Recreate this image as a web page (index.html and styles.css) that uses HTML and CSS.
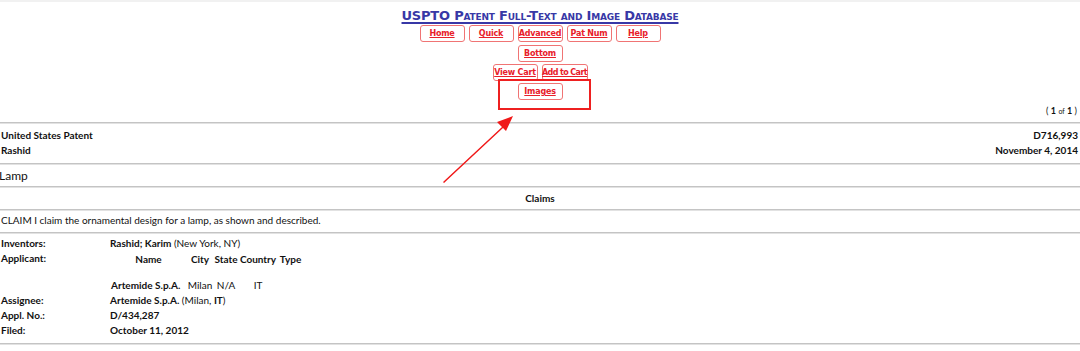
FILE: index.html
```html
<!DOCTYPE html>
<html lang="en">
<head>
    <meta charset="UTF-8">
    <title>United States Patent: D716993</title>
    <link rel="stylesheet" href="styles.css">
</head>
<body>
    <div class="topbar"></div>
    <div class="header">
        <a class="title" href="#">USPTO Patent Full-Text and Image Database</a>
        <div class="btnrow first">
            <a class="btn" href="#">Home</a>
            <a class="btn" href="#">Quick</a>
            <a class="btn" href="#">Advanced</a>
            <a class="btn" href="#">Pat Num</a>
            <a class="btn" href="#">Help</a>
        </div>
        <div class="btnrow">
            <a class="btn" href="#">Bottom</a>
        </div>
        <div class="btnrow">
            <a class="btn" href="#">View Cart</a>
            <a class="btn wide" href="#">Add to Cart</a>
        </div>
        <div class="btnrow">
            <a class="btn" href="#">Images</a>
        </div>
        <div class="mark"></div>
        <svg class="arrow" width="90" height="80" viewBox="0 0 90 80">
            <polygon points="0,73 59,18 54,13 70,7 63,22 60,19 1,74" fill="#f01818"/>
        </svg>
    </div>
    <div class="count">( <b>1</b> <small>of</small> <b>1</b> )</div>
    <hr>
    <div class="pair">
        <div><b>United States Patent<br>Rashid</b></div>
        <div class="right"><b>D716,993<br>November 4, 2014</b></div>
    </div>
    <hr>
    <div class="lamp">Lamp</div>
    <hr>
    <div class="claims-head">Claims</div>
    <hr>
    <div class="claim">CLAIM I claim the ornamental design for a lamp, as shown and described.</div>
    <hr>
    <div class="details">
        <div class="label">Inventors:</div>
        <div><b>Rashid; Karim</b> (New York, NY)</div>
        <div class="label">Applicant:</div>
        <div class="applicant">
            <b>Name</b><b>City</b><b>State</b><b>Country</b><b>Type</b>
            <span class="blank"></span>
            <b class="firm">Artemide S.p.A.</b><span>Milan</span><span>N/A</span><span>IT</span><span></span>
        </div>
        <div class="label">Assignee:</div>
        <div><b>Artemide S.p.A.</b> (Milan, <b>IT</b>)</div>
        <div class="label">Appl. No.:</div>
        <div><b>D/434,287</b></div>
        <div class="label">Filed:</div>
        <div><b>October 11, 2012</b></div>
    </div>
    <hr>
</body>
</html>
```

FILE: styles.css
```css
body {
    margin: 0;
    padding: 0;
    font-family: Lato, "Open Sans", sans-serif;
    font-size: 10px;
    color: #111;
    background: white;
}
.topbar {
    height: 2px;
    background: #f1f1f1;
}
.header {
    position: relative;
    display: flex;
    flex-direction: column;
    align-items: center;
    padding-top: 6px;
}
.title {
    font-family: Verdana, "DejaVu Sans", sans-serif;
    font-variant: small-caps;
    font-weight: bold;
    font-size: 13px;
    letter-spacing: -0.2px;
    color: #3838a6;
    text-decoration: underline;
    text-decoration-thickness: 2px;
    text-underline-offset: 2px;
    line-height: 15px;
    margin-bottom: 2px;
    white-space: nowrap;
}
.btnrow {
    display: flex;
    gap: 4px;
    margin-bottom: 2px;
}
.btnrow.first {
    margin-bottom: 3px;
}
.btn {
    display: flex;
    align-items: center;
    justify-content: center;
    box-sizing: border-box;
    width: 45px;
    height: 17px;
    border: 1px solid #f07474;
    border-radius: 3px;
    font-family: Verdana, "DejaVu Sans", sans-serif;
    font-size: 8px;
    font-weight: bold;
    letter-spacing: -0.2px;
    color: #e8202a;
    text-decoration: underline;
    white-space: nowrap;
}
.btn.wide {
    width: 46px;
    letter-spacing: -0.6px;
}
.mark {
    position: absolute;
    left: 498px;
    top: 77px;
    width: 89px;
    height: 27px;
    border: 2px solid #ee2020;
}
.arrow {
    position: absolute;
    left: 443px;
    top: 107px;
}
.count {
    text-align: right;
    font-size: 9px;
    padding-right: 3px;
    margin-top: 3px;
    margin-bottom: 5px;
    line-height: 12px;
}
.count small {
    font-size: 7px;
}
hr {
    margin: 0;
    border: 0;
    border-top: 1px solid #c4c4c4;
    border-bottom: 1px solid #e2e2e2;
}
.pair {
    display: flex;
    justify-content: space-between;
    padding: 4px 2px 5px 1px;
    line-height: 15px;
}
.right {
    text-align: right;
}
.lamp {
    font-size: 12px;
    line-height: 15px;
    padding: 3px 0;
    margin-left: -1px;
}
.claims-head {
    text-align: center;
    font-weight: bold;
    line-height: 15px;
    padding: 3px 0;
}
.claim {
    line-height: 15px;
    padding: 2px 0 4px 1px;
}
.details {
    display: grid;
    grid-template-columns: 109px 1fr;
    padding: 2px 0 5px 1px;
    line-height: 15px;
}
.label {
    font-weight: bold;
}
.applicant {
    display: grid;
    grid-template-columns: 77px 26px 26px 38px 27px;
    justify-items: center;
    padding-top: 1px;
}
.applicant .firm {
    justify-self: start;
    padding-left: 1px;
}
.applicant .blank {
    grid-column: 1 / -1;
    height: 11px;
}
```
